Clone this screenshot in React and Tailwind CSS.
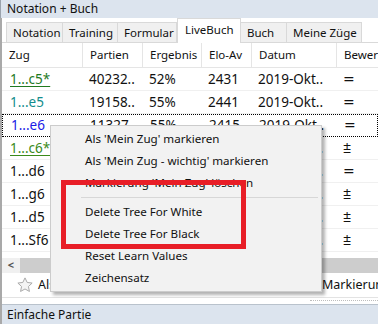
import React from 'react';

const tabs = [
  { label: 'Notation', w: 57 },
  { label: 'Training', w: 55 },
  { label: 'Formular', w: 59 },
  { label: 'LiveBuch', w: 64, active: true },
  { label: 'Buch', w: 46 },
  { label: 'Meine Züge', w: 75 },
];

const cols = [
  { label: 'Zug', w: 81 },
  { label: 'Partien', w: 60 },
  { label: 'Ergebnis', w: 59 },
  { label: 'Elo-Av', w: 50 },
  { label: 'Datum', w: 85 },
  { label: 'Bewert', w: 60 },
];

const rows = [
  { zug: '1...c5*', cls: 'text-[#1f7a1f] underline', p: '40232..', e: '52%', elo: '2431', d: '2019-Okt..', b: '=' },
  { zug: '1...e5', cls: 'text-[#138c8c]', p: '19158..', e: '55%', elo: '2441', d: '2019-Okt..', b: '=' },
  { zug: '1...e6', cls: 'text-[#1a1ae6]', p: '11327', e: '55%', elo: '2415', d: '2019-Okt..', b: '=', focus: true },
  { zug: '1...c6*', cls: 'text-[#3a8a1a] underline', p: '9870..', e: '54%', elo: '2420', d: '2019-Okt..', b: '⩲' },
  { zug: '1...d6', cls: 'text-[#111]', p: '5123..', e: '53%', elo: '2401', d: '2019-Okt..', b: '=' },
  { zug: '1...g6', cls: 'text-[#111]', p: '2144..', e: '56%', elo: '2398', d: '2019-Okt..', b: '⩲' },
  { zug: '1...d5', cls: 'text-[#111]', p: '1630..', e: '58%', elo: '2387', d: '2019-Okt..', b: '⩲' },
  { zug: '1...Sf6', cls: 'text-[#111]', p: '1101..', e: '57%', elo: '2379', d: '2019-Okt..', b: '⩲' },
];

const menu = [
  "Als 'Mein Zug' markieren",
  "Als 'Mein Zug - wichtig' markieren",
  "Markierung 'Mein Zug' löschen",
  '-',
  'Delete Tree For White',
  'Delete Tree For Black',
  'Reset Learn Values',
  'Zeichensatz',
];

export default function App() {
  return (
    <div className="relative w-[378px] h-[324px] overflow-hidden bg-white flex flex-col font-['Noto_Sans',sans-serif] text-[#111]">
      {/* title */}
      <div className="h-[18px] shrink-0 bg-[#dce4ee] border-l border-[#9aa3ad] flex items-center pl-[6px] text-[12px] leading-none">
        Notation + Buch
      </div>

      <div className="flex-1 flex flex-col border-l-2 border-[#a9a9a9] min-h-0">
        {/* tabs */}
        <div className="h-[25px] shrink-0 flex items-end pl-[4px] border-b border-[#d9d9d9]">
          {tabs.map((t) =>
            t.active ? (
              <div
                key={t.label}
                style={{ width: t.w }}
                className="h-[25px] -mb-px shrink-0 bg-white border border-b-0 border-[#d9d9d9] flex items-center pl-[7px] text-[11.5px] pb-[3px] whitespace-nowrap"
              >
                {t.label}
              </div>
            ) : (
              <div
                key={t.label}
                style={{ width: t.w }}
                className="h-[20px] shrink-0 bg-[#f0f0f0] border border-b-0 border-l-0 first:border-l border-[#d9d9d9] flex items-center pl-[6px] text-[11.5px] whitespace-nowrap"
              >
                {t.label}
              </div>
            )
          )}
        </div>

        {/* header */}
        <div className="h-[25px] shrink-0 flex border-b border-[#e5e5e5]">
          {cols.map((c) => (
            <div
              key={c.label}
              style={{ width: c.w }}
              className="shrink-0 border-r border-[#e5e5e5] flex items-center pl-[7px] text-[11.5px] whitespace-nowrap overflow-hidden"
            >
              {c.label}
            </div>
          ))}
        </div>

        {/* rows */}
        {rows.map((r) => (
          <div
            key={r.zug}
            className={`h-[23px] shrink-0 flex items-center text-[13.5px] whitespace-nowrap ${
              r.focus ? 'border border-dotted border-black' : 'border-b border-[#f0f0f0]'
            }`}
          >
            <div className={`w-[81px] shrink-0 pl-[8px] ${r.cls} decoration-1 underline-offset-2`}>{r.zug}</div>
            <div className="w-[60px] shrink-0 pl-[6px]">{r.p}</div>
            <div className="w-[59px] shrink-0 pl-[6px]">{r.e}</div>
            <div className="w-[50px] shrink-0 pl-[6px]">{r.elo}</div>
            <div className="w-[85px] shrink-0 pl-[6px] overflow-hidden">{r.d}</div>
            <div className="w-[60px] shrink-0 pl-[6px] font-['DejaVu_Sans',sans-serif] text-[14px]">{r.b}</div>
          </div>
        ))}

        <div className="h-[6px] shrink-0" />

        {/* horizontal scrollbar */}
        <div className="h-[15px] shrink-0 flex bg-[#f0f0f0]">
          <div className="w-[18px] flex items-center justify-center text-[11px] text-[#555] font-bold">&lt;</div>
          <div className="flex-1 bg-[#cdcdcd]" />
        </div>

        {/* toolbar */}
        <div className="h-[25px] shrink-0 flex items-center pl-[14px] text-[12.5px] border-b border-[#e3e3e3]">
          <svg width="18" height="18" viewBox="0 0 24 24" className="shrink-0">
            <path
              d="M12 2.5l2.9 6.1 6.6.8-4.9 4.6 1.3 6.6L12 17.3l-5.9 3.3 1.3-6.6-4.9-4.6 6.6-.8z"
              fill="#f4f4f4"
              stroke="#a8a8a8"
              strokeWidth="1.3"
              strokeLinejoin="round"
            />
          </svg>
          <span className="ml-[4px]">Als</span>
          <span className="ml-auto w-[56px] overflow-hidden whitespace-nowrap">Markierung</span>
        </div>

        {/* grip */}
        <div className="h-[6px] shrink-0 flex justify-end">
          <div className="w-[68px] h-[3px] mt-[2px] border-t border-dotted border-[#bdbdbd]" />
        </div>

        {/* bottom panel */}
        <div className="flex-1 bg-[#dce4ee] border-t border-[#b9c2cc] flex items-center pl-[5px] text-[12px]">
          Einfache Partie
        </div>
      </div>

      {/* context menu */}
      <div className="absolute left-[50px] top-[125px] w-[272px] bg-[#f2f2f2] border border-[#cccccc] py-[2px] shadow-[3px_3px_3px_rgba(0,0,0,0.3)] text-[11.6px]">
        {menu.map((m, i) =>
          m === '-' ? (
            <div key={i} className="h-[7px] flex items-center pl-[30px] pr-[3px]">
              <div className="h-px w-full bg-[#d7d7d7]" />
            </div>
          ) : (
            <div key={i} className="h-[22px] flex items-center pl-[34px] whitespace-nowrap">
              {m}
            </div>
          )
        )}
      </div>

      {/* red highlight */}
      <div className="absolute left-[61px] top-[180px] w-[185px] h-[69px] border-[5px] border-[#e81e27]" />
    </div>
  );
}
